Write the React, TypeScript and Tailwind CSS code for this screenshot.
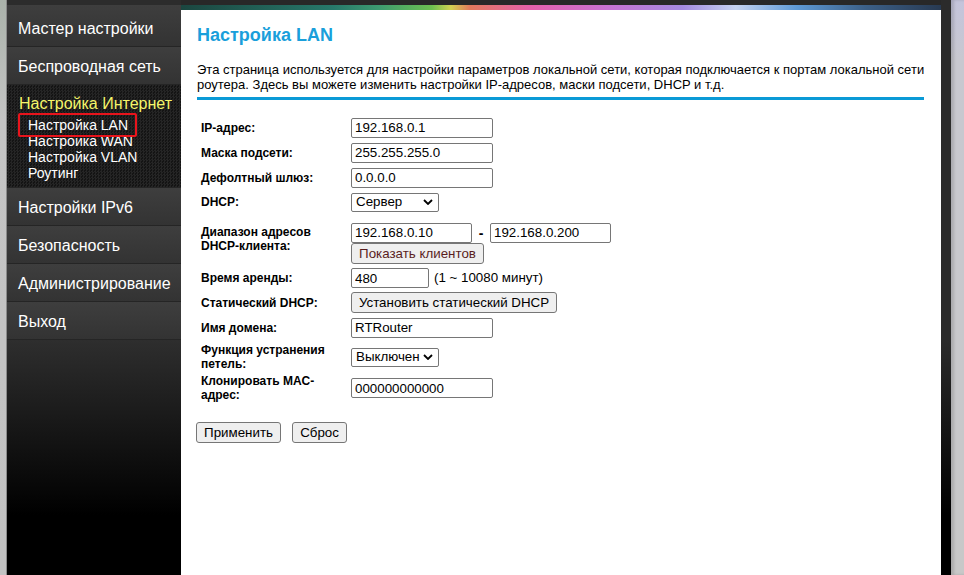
import React from "react";

function Field({ value, w }: { value: string; w: string }) {
  return (
    <input
      readOnly
      defaultValue={value}
      className={`${w} h-[20px] border border-[#767676] rounded-[2px] bg-white px-[3px] text-[13.33px] text-black outline-none`}
    />
  );
}

function FakeSelect({ value, w, h }: { value: string; w: string; h: string }) {
  return (
    <div
      className={`${w} ${h} border border-[#767676] rounded-[2px] bg-white pl-[4px] pr-[5px] flex items-center justify-between text-[13.33px] text-black`}
    >
      <span className="leading-none">{value}</span>
      <svg width="10" height="6" viewBox="0 0 10 6" className="shrink-0">
        <path d="M1 1 L5 5 L9 1" fill="none" stroke="#000" strokeWidth="1.8" />
      </svg>
    </div>
  );
}

function Btn({ children, w, cls = "" }: { children: React.ReactNode; w: string; cls?: string }) {
  return (
    <button
      className={`${w} h-[21px] bg-[#efefef] border border-[#767676] rounded-[3px] text-[13.33px] leading-none flex items-center justify-center ${cls}`}
    >
      {children}
    </button>
  );
}

function Label({ children }: { children: React.ReactNode }) {
  return <div className="w-[150px] shrink-0 text-[12px] font-bold leading-[14px] text-black">{children}</div>;
}

const mainItem =
  "border-b border-[#252525] bg-[linear-gradient(to_bottom,#3e3e3e,#333333)] pl-[11px] flex items-center text-white text-[16px]";

export default function App() {
  return (
    <div className="w-[964px] h-[575px] overflow-hidden flex font-['Liberation_Sans',Arial,sans-serif] bg-[#c8c8c8]">
      {/* left gray strip */}
      <div className="w-[7px] h-full bg-[linear-gradient(to_bottom,#aab2aa,#c4c4c4_120px,#c2c2c2)] border-r border-[#8a8a8a]" />

      {/* sidebar */}
      <div className="w-[174px] h-full flex flex-col bg-[#2a2a2a]">
        <div className="h-[5px] bg-[#2c2c2c]" />
        <div className={`${mainItem} h-[42px] pt-[7px]`}>Мастер настройки</div>
        <div className={`${mainItem} h-[38px] pt-[3px]`}>Беспроводная сеть</div>
        <div className="h-[103px] border-b border-[#252525] bg-[#191919] bg-[repeating-conic-gradient(#252525_0%_25%,#141414_0%_50%)] bg-[length:3px_3px] pt-[10px]">
          <div className="pl-[12px] text-[16px] leading-[18px] text-[#f5f56a]">Настройка Интернет</div>
          <div className="pl-[21px] pt-[4px] text-[14px] leading-[16px] text-white">
            <div className="relative">
              <span className="absolute left-[-10px] top-[-4px] w-[119px] h-[24px] border-2 border-[#e8141c] rounded-[2px]" />
              Настройка LAN
            </div>
            <div>Настройка WAN</div>
            <div>Настройка VLAN</div>
            <div>Роутинг</div>
          </div>
        </div>
        <div className={`${mainItem} h-[38px] pt-[3px]`}>Настройки IPv6</div>
        <div className={`${mainItem} h-[38px] pt-[3px]`}>Безопасность</div>
        <div className={`${mainItem} h-[38px] pt-[3px]`}>Администрирование</div>
        <div className={`${mainItem} h-[38px] pt-[3px]`}>Выход</div>
        <div className="flex-1 bg-[linear-gradient(to_bottom,#2e2e2e,#000_175px)]" />
      </div>

      {/* main */}
      <div className="w-[760px] h-full flex flex-col">
        <div className="h-[5px] bg-[#282828]" />
        <div className="h-[5px] bg-[linear-gradient(to_right,#1b4640_0%,#27786a_20%,#3d9a70_26%,#6cc050_33%,#d2d252_35.5%,#e27a5c_38%,#e460ac_46%,#c872d2_56%,#a48ae0_66%,#c4d2f0_73%,#5e9ad6_81%,#3c6088_90%,#283a52_100%)]" />
        <div className="flex-1 bg-white px-[16px] pt-[15px]">
          <div className="text-[18px] leading-[20px] font-bold text-[#1a9fdb]">Настройка LAN</div>
          <div className="mt-[17px] text-[13px] leading-[15px] text-black whitespace-nowrap">
            Эта страница используется для настройки параметров локальной сети, которая подключается к портам локальной сети
            <br />
            роутера. Здесь вы можете изменить настройки IP-адресов, маски подсети, DHCP и т.д.
          </div>
          <div className="mt-[5px] h-[3px] w-[727px] bg-[#0a9ad6]" />

          <div className="mt-[15px] ml-[4px] flex flex-col">
            <div className="h-[25px] flex items-center">
              <Label>IP-адрес:</Label>
              <Field value="192.168.0.1" w="w-[142px]" />
            </div>
            <div className="h-[25px] flex items-center">
              <Label>Маска подсети:</Label>
              <Field value="255.255.255.0" w="w-[142px]" />
            </div>
            <div className="h-[25px] flex items-center">
              <Label>Дефолтный шлюз:</Label>
              <Field value="0.0.0.0" w="w-[142px]" />
            </div>
            <div className="h-[24px] flex items-center">
              <Label>DHCP:</Label>
              <FakeSelect value="Сервер" w="w-[88px]" h="h-[19px]" />
            </div>
            <div className="h-[52px] flex items-start pt-[8px]">
              <div className="pt-[3px]">
                <Label>
                  Диапазон адресов
                  <br />
                  DHCP-клиента:
                </Label>
              </div>
              <div className="flex flex-col">
                <div className="flex items-center h-[21px]">
                  <Field value="192.168.0.10" w="w-[121px]" />
                  <span className="w-[18px] text-center font-bold text-[14px] leading-none">-</span>
                  <Field value="192.168.0.200" w="w-[121px]" />
                </div>
                <Btn w="w-[133px]" cls="text-[#5a1e1e]">Показать клиентов</Btn>
              </div>
            </div>
            <div className="h-[24px] flex items-center">
              <Label>Время аренды:</Label>
              <Field value="480" w="w-[78px]" />
              <span className="ml-[5px] text-[13.33px] text-black">(1 ~ 10080 минут)</span>
            </div>
            <div className="h-[25px] flex items-center">
              <Label>Статический DHCP:</Label>
              <Btn w="w-[206px]">Установить статический DHCP</Btn>
            </div>
            <div className="h-[25px] flex items-center">
              <Label>Имя домена:</Label>
              <Field value="RTRouter" w="w-[142px]" />
            </div>
            <div className="h-[34px] flex items-center">
              <Label>
                Функция устранения
                <br />
                петель:
              </Label>
              <FakeSelect value="Выключен" w="w-[88px]" h="h-[19px]" />
            </div>
            <div className="h-[28px] flex items-center">
              <Label>
                Клонировать MAC-
                <br />
                адрес:
              </Label>
              <Field value="000000000000" w="w-[142px]" />
            </div>
          </div>

          <div className="mt-[20px] ml-[-1px] flex gap-[11px]">
            <Btn w="w-[85px]">Применить</Btn>
            <Btn w="w-[55px]">Сброс</Btn>
          </div>
        </div>
      </div>

      {/* right dark strip */}
      <div className="w-[10px] h-full bg-[linear-gradient(to_bottom,#2b2b2b_340px,#000_515px)]" />
      {/* right gray */}
      <div className="w-[13px] h-full bg-[linear-gradient(to_bottom,#c4c4dc,#c8c8d0_60px,#c8c8c8)] shadow-[inset_3px_0_3px_rgba(0,0,0,0.15)]" />
    </div>
  );
}
